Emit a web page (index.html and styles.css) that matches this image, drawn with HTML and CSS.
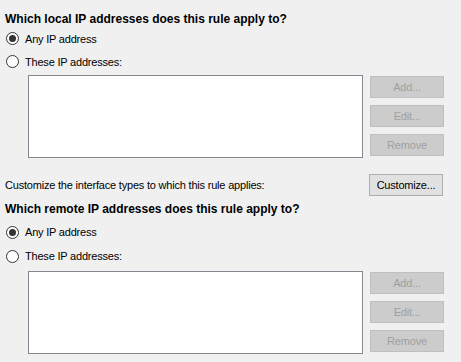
FILE: index.html
```html
<!DOCTYPE html>
<html>
<head>
  <title>Scope</title>
  <link rel="stylesheet" href="styles.css">
</head>
<body>
  <div class="page">
    <div class="scope local">
      <h3>Which local IP addresses does this rule apply to?</h3>
      <label class="option"><input type="radio" name="local" checked> Any IP address</label>
      <label class="option"><input type="radio" name="local"> These IP addresses:</label>
      <div class="list-row">
        <div class="address-list"></div>
        <div class="buttons">
          <button disabled>Add...</button>
          <button disabled>Edit...</button>
          <button disabled>Remove</button>
        </div>
      </div>
    </div>

    <div class="customize-row">
      <span>Customize the interface types to which this rule applies:</span>
      <button>Customize...</button>
    </div>

    <div class="scope remote">
      <h3>Which remote IP addresses does this rule apply to?</h3>
      <label class="option"><input type="radio" name="remote" checked> Any IP address</label>
      <label class="option"><input type="radio" name="remote"> These IP addresses:</label>
      <div class="list-row">
        <div class="address-list"></div>
        <div class="buttons">
          <button disabled>Add...</button>
          <button disabled>Edit...</button>
          <button disabled>Remove</button>
        </div>
      </div>
    </div>
  </div>
</body>
</html>
```

FILE: styles.css
```css
body {
  margin: 0;
  background: #f0f0f0;
  font-family: 'Liberation Sans', Arial, sans-serif;
  font-size: 11px;
  letter-spacing: -0.2px;
  color: #000;
}

.page {
  padding: 11px 0 0 5px;
}

h3 {
  margin: 0;
  font-size: 12px;
  font-weight: bold;
  letter-spacing: 0;
  line-height: 16px;
}

.remote h3 {
  margin-bottom: 3px;
}

.option {
  display: flex;
  align-items: center;
  gap: 6px;
  height: 23px;
  padding-left: 1px;
}

.remote .option {
  height: 24px;
}

input[type="radio"] {
  appearance: none;
  margin: 0;
  width: 13px;
  height: 13px;
  border: 1px solid #333;
  border-radius: 50%;
  background: #fff;
  position: relative;
}

input[type="radio"]:checked::after {
  content: "";
  position: absolute;
  left: 2px;
  top: 2px;
  width: 7px;
  height: 7px;
  border-radius: 50%;
  background: #333;
}

.list-row {
  display: flex;
  align-items: flex-start;
  gap: 7px;
  margin: 2px 0 0 23px;
}

.remote .list-row {
  margin-top: 3px;
}

.address-list {
  width: 333px;
  height: 81px;
  background: #fff;
  border: 1px solid #828790;
}

.buttons {
  display: flex;
  flex-direction: column;
  gap: 7px;
  padding-top: 1px;
}

button {
  width: 74px;
  height: 22px;
  padding: 0;
  font-family: inherit;
  font-size: 11px;
  letter-spacing: -0.2px;
  background: #e1e1e1;
  border: 1px solid #adadad;
  color: #000;
}

button:disabled {
  background: #cccccc;
  border-color: #bfbfbf;
  color: #a0a0a0;
}

.customize-row {
  display: flex;
  align-items: center;
  justify-content: space-between;
  width: 438px;
  margin-top: 16px;
}

.remote {
  margin-top: 5px;
}
```
